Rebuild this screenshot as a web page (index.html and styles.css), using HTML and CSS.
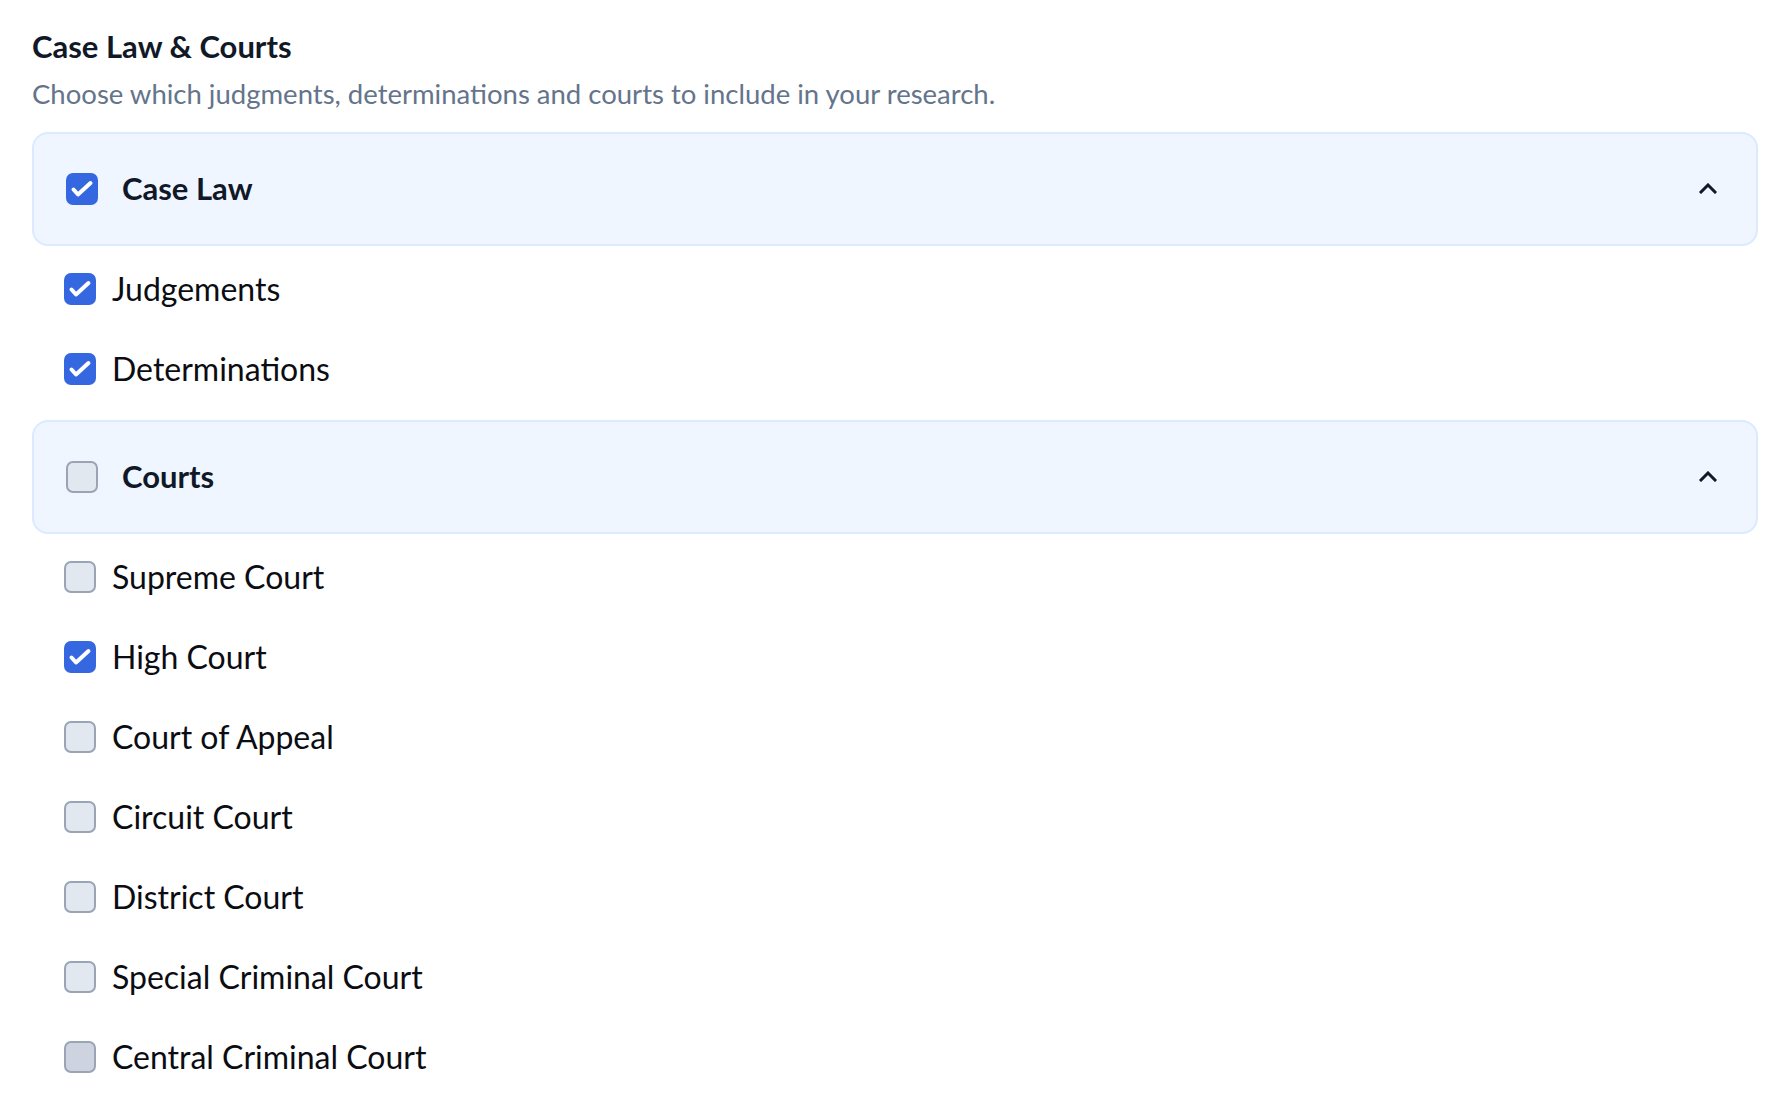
FILE: index.html
```html
<!DOCTYPE html>
<html lang="en">
<head>
<meta charset="utf-8">
<title>Case Law &amp; Courts</title>
<link rel="stylesheet" href="styles.css">
</head>
<body>
<main class="page">
  <header class="intro">
    <h1 class="title">Case Law &amp; Courts</h1>
    <p class="subtitle">Choose which judgments, determinations and courts to include in your research.</p>
  </header>

  <section class="group">
    <div class="group-head">
      <span class="box box-checked"><svg viewBox="0 0 32 32"><path d="M7.5 16.5 L12 21.5 L24.5 10"/></svg></span>
      <span class="group-label">Case Law</span>
      <svg class="chevron" viewBox="0 0 18 11"><path d="M2 9 L9 2 L16 9"/></svg>
    </div>
    <ul class="items">
      <li class="item"><span class="box box-checked"><svg viewBox="0 0 32 32"><path d="M7.5 16.5 L12 21.5 L24.5 10"/></svg></span><span class="item-label">Judgements</span></li>
      <li class="item"><span class="box box-checked"><svg viewBox="0 0 32 32"><path d="M7.5 16.5 L12 21.5 L24.5 10"/></svg></span><span class="item-label">Determinations</span></li>
    </ul>
  </section>

  <section class="group">
    <div class="group-head">
      <span class="box"></span>
      <span class="group-label">Courts</span>
      <svg class="chevron" viewBox="0 0 18 11"><path d="M2 9 L9 2 L16 9"/></svg>
    </div>
    <ul class="items">
      <li class="item"><span class="box"></span><span class="item-label">Supreme Court</span></li>
      <li class="item"><span class="box box-checked"><svg viewBox="0 0 32 32"><path d="M7.5 16.5 L12 21.5 L24.5 10"/></svg></span><span class="item-label">High Court</span></li>
      <li class="item"><span class="box"></span><span class="item-label">Court of Appeal</span></li>
      <li class="item"><span class="box"></span><span class="item-label">Circuit Court</span></li>
      <li class="item"><span class="box"></span><span class="item-label">District Court</span></li>
      <li class="item"><span class="box"></span><span class="item-label">Special Criminal Court</span></li>
      <li class="item"><span class="box box-hover"></span><span class="item-label">Central Criminal Court</span></li>
    </ul>
  </section>
</main>
</body>
</html>
```

FILE: styles.css
```css
* { box-sizing: border-box; }

html, body {
  margin: 0;
  padding: 0;
  background: #ffffff;
}

body {
  font-family: "Lato", "Noto Sans", "Liberation Sans", sans-serif;
  color: #0b0f19;
}

.page {
  padding: 28px 34px 0 32px;
}

.intro {
  margin-bottom: 20px;
}

.title {
  margin: 0;
  font-size: 31px;
  line-height: 36px;
  font-weight: 700;
  color: #111827;
}

.subtitle {
  margin: 12px 0 0;
  font-size: 27.5px;
  line-height: 36px;
  font-weight: 400;
  color: #64748b;
}

.group-head {
  display: flex;
  align-items: center;
  height: 114px;
  padding: 0 32px 0 32px;
  background: #eff6ff;
  border: 2px solid #dbeafe;
  border-radius: 16px;
}

.group-label {
  margin-left: 24px;
  font-size: 31px;
  line-height: 32px;
  font-weight: 700;
  color: #111827;
  flex: 1;
  position: relative;
  top: -1px;
}

.chevron {
  width: 18px;
  height: 11px;
  margin-right: 7px;
  fill: none;
  stroke: #111827;
  stroke-width: 3;
  stroke-linecap: square;
  position: relative;
  top: -1px;
}

.items {
  list-style: none;
  margin: 0;
  padding: 27px 0 35px 32px;
  display: flex;
  flex-direction: column;
  gap: 48px;
}

.item {
  display: flex;
  align-items: center;
  gap: 16px;
  height: 32px;
}

.item-label {
  font-size: 32px;
  line-height: 32px;
  color: #0b0d12;
}

.box {
  flex: none;
  width: 32px;
  height: 32px;
  border-radius: 7px;
  background: #e2e8f0;
  border: 2px solid #9aa4b4;
  display: inline-flex;
}

.box-hover {
  background: #cdd4df;
}

.box-checked {
  background: #3467e0;
  border: none;
}

.box svg {
  width: 32px;
  height: 32px;
  fill: none;
  stroke: #ffffff;
  stroke-width: 4;
  stroke-linecap: round;
  stroke-linejoin: round;
}
```
